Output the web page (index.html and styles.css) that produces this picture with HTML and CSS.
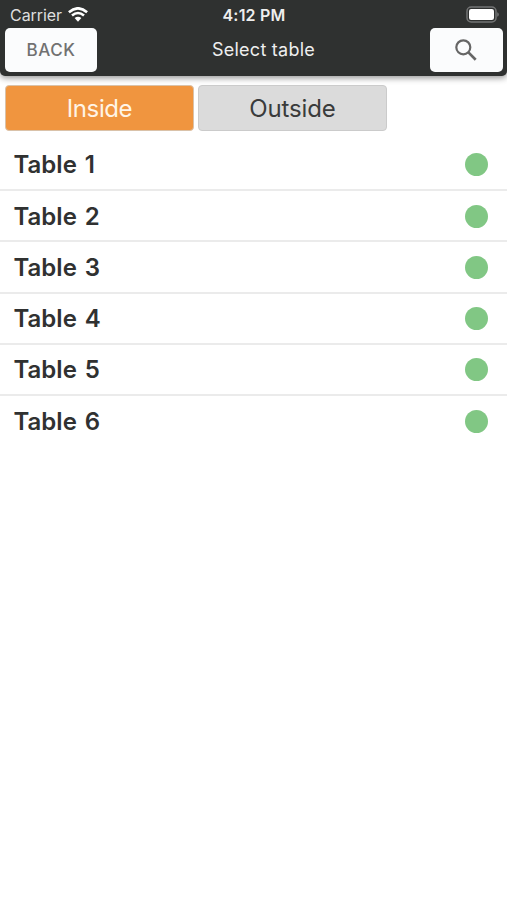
FILE: index.html
```html
<!DOCTYPE html>
<html lang="en">
<head>
<meta charset="utf-8">
<title>Select table</title>
<link rel="stylesheet" href="styles.css">
</head>
<body>
<header class="header">
  <div class="status">
    <div class="carrier"><span class="carrier-name">Carrier</span>
      <svg class="wifi" viewBox="0 0 20 15" width="20" height="15"><g fill="none" stroke="#fff" stroke-width="2.6"><path d="M.9 5.2Q10-2.6 19.1 5.2"/><path d="M4 8.6Q10 3.4 16 8.6"/></g><path fill="#fff" d="M6.6 11.1Q10 8.3 13.4 11.1L10 14.7Z"/></svg>
    </div>
    <span class="time">4:12 PM</span>
    <svg class="battery" viewBox="0 0 33 17" width="33" height="17"><rect x="1" y="1" width="29" height="15" rx="4.2" fill="none" stroke="#737474" stroke-width="1.5"/><rect x="3" y="3" width="25" height="11" rx="2.2" fill="#fff"/><path d="M31.2 6.2q1.6.6 1.6 2.3t-1.6 2.3z" fill="#737474"/></svg>
  </div>
  <div class="toolbar">
    <button class="btn back">BACK</button>
    <h1 class="title">Select table</h1>
    <button class="btn search" aria-label="Search"><svg viewBox="0 0 22 22" width="22" height="22" fill="none" stroke="#666" stroke-width="2.2"><circle cx="8.3" cy="8.3" r="7"/><path d="M13.4 13.4l7.3 7.3" stroke-width="2.7"/></svg></button>
  </div>
</header>
<nav class="tabs">
  <button class="tab active">Inside</button>
  <button class="tab">Outside</button>
</nav>
<ul class="list">
  <li class="row"><span>Table 1</span><i class="dot"></i></li>
  <li class="row"><span>Table 2</span><i class="dot"></i></li>
  <li class="row"><span>Table 3</span><i class="dot"></i></li>
  <li class="row"><span>Table 4</span><i class="dot"></i></li>
  <li class="row"><span>Table 5</span><i class="dot"></i></li>
  <li class="row"><span>Table 6</span><i class="dot"></i></li>
</ul>
</body>
</html>
```
FILE: styles.css
```css
* { box-sizing: border-box; }
body { margin: 0; background: #fff; color: #303131; font-family: Inter, "Liberation Sans", sans-serif; }
button { font-family: inherit; padding: 0; margin: 0; }
.header { height: 76px; background: #2f3130; border-radius: 0 0 5px 5px; box-shadow: 0 2px 6px rgba(0,0,0,.42); }
.status { height: 28px; padding: 1px 8px 0 10px; display: grid; grid-template-columns: 1fr auto 1fr; align-items: center; color: #eee; }
.carrier { display: flex; align-items: center; gap: 6px; }
.carrier-name { font-size: 16px; letter-spacing: -.05px; color: #dedede; }
.time { font-size: 16px; font-weight: 600; letter-spacing: .2px; position: relative; left: -.5px; }
.battery { justify-self: end; margin-bottom: 1px; }
.toolbar { padding: 0 4px 0 5px; display: flex; justify-content: space-between; align-items: center; }
.btn { height: 44px; border: 0; border-radius: 5px; background: #fbfcfd; color: #717171; display: flex; align-items: center; justify-content: center; }
.back { width: 92px; font-size: 17px; font-weight: 500; letter-spacing: .6px; }
.search { width: 73px; }
.search svg { margin-left: -2px; }
.title { margin: 0; padding-bottom: 2px; font-size: 18px; font-weight: 400; letter-spacing: .25px; color: #eee; }
.tabs { display: flex; gap: 4px; padding: 9px 5px 8px; height: 63px; }
.tab { width: 189px; height: 46px; border: 1px solid #cbcbcb; border-radius: 4px; background: #dbdbdb; color: #3a3b3b; font-size: 24px; letter-spacing: -.15px; }
.active { background: #f0953f; border-color: #d9c2aa; color: #fff4e6; letter-spacing: -.4px; }
.list { margin: 0; padding: 0; list-style: none; }
.row { height: 51.25px; padding: 1px 19px 0 13.5px; display: flex; align-items: center; justify-content: space-between; border-bottom: 2px solid #ebebeb; font-size: 24px; font-weight: 600; word-spacing: 1.8px; }
.row:first-child { height: 52px; }
.row:last-child { border-bottom-color: transparent; }
.dot { width: 23px; height: 23px; border-radius: 50%; background: #81c784; }
```
